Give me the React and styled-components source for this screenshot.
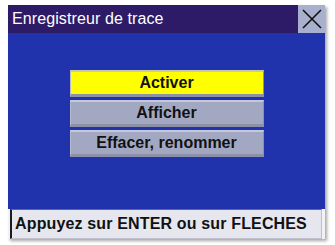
import React from "react";
import styled, { createGlobalStyle } from "styled-components";

const Global = createGlobalStyle`
  html, body { margin: 0; padding: 0; background: #ffffff; }
  body { font-family: "Liberation Sans", Arial, sans-serif; }
`;

const Page = styled.div`
  width: 335px;
  height: 245px;
  padding: 5px 0 0 8px;
  box-sizing: border-box;
`;

const Screen = styled.div`
  width: 317px;
  height: 234px;
  display: flex;
  flex-direction: column;
  background: #f2f2f6;
  box-shadow: 2px 2px 3px rgba(0, 0, 0, 0.35);
`;

const TitleBar = styled.div`
  height: 28px;
  display: flex;
  align-items: stretch;
  background: #2d1b68;
`;

const Title = styled.div`
  flex: 1;
  display: flex;
  align-items: center;
  padding-left: 4px;
  color: #ffffff;
  font-size: 16px;
  letter-spacing: 0.1px;
`;

const CloseBox = styled.div`
  width: 27px;
  display: flex;
  align-items: center;
  justify-content: center;
  background: #a9b0cd;
`;

const Body = styled.div`
  flex: 1;
  display: flex;
  flex-direction: column;
  align-items: center;
  gap: 3px;
  padding-top: 37px;
  background: #2132ad;
`;

const MenuButton = styled.div`
  width: 194px;
  height: 27px;
  box-sizing: border-box;
  display: flex;
  align-items: center;
  justify-content: center;
  font-size: 16px;
  font-weight: bold;
  color: #111111;
  background: ${(p) => (p.$active ? "#ffff00" : "#a3a8c2")};
  border-top: 2px solid ${(p) => (p.$active ? "#c8c8b0" : "#c4c8da")};
  border-bottom: 3px solid #8d91a8;
  border-left: 1px solid #b5b9cc;
  border-right: 1px solid #8d91a8;
`;

const StatusBar = styled.div`
  height: 30px;
  box-sizing: border-box;
  margin: 0 3px 0 2px;
  display: flex;
  align-items: center;
  padding-left: 3px;
  background: #e6e6ee;
  border-top: 1px solid #6a6a78;
  border-left: 2px solid #1a1a22;
  border-right: 1px solid #c0c0cc;
  border-bottom: 1px solid #c0c0cc;
  font-size: 16px;
  font-weight: bold;
  letter-spacing: 0.15px;
  color: #111111;
`;

const items = [
  { label: "Activer", active: true },
  { label: "Afficher" },
  { label: "Effacer, renommer" },
];

export default function App() {
  return (
    <>
      <Global />
      <Page>
        <Screen>
          <TitleBar>
            <Title>Enregistreur de trace</Title>
            <CloseBox>
              <svg width="22" height="22" viewBox="0 0 22 22">
                <path d="M2 2 L20 20 M20 2 L2 20" stroke="#111" strokeWidth="1.6" fill="none" />
              </svg>
            </CloseBox>
          </TitleBar>
          <Body>
            {items.map((it) => (
              <MenuButton key={it.label} $active={it.active}>
                {it.label}
              </MenuButton>
            ))}
          </Body>
          <StatusBar>Appuyez sur ENTER ou sur FLECHES</StatusBar>
        </Screen>
      </Page>
    </>
  );
}
